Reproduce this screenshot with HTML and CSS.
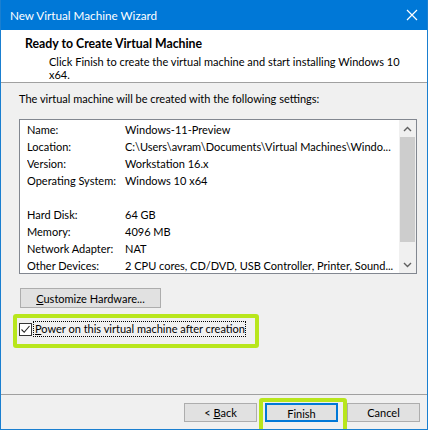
FILE: index.html
```html
<!DOCTYPE html>
<html lang="en">
<head>
    <meta charset="UTF-8">
    <title>New Virtual Machine Wizard</title>
    <link rel="stylesheet" href="styles.css">
</head>
<body>
    <div class="window">
        <div class="titlebar">
            <span class="title">New Virtual Machine Wizard</span>
            <svg class="close" width="12" height="12" viewBox="0 0 12 12">
                <path d="M1 1 L11 11 M11 1 L1 11" stroke="#fff" stroke-width="1.2" fill="none"/>
            </svg>
        </div>

        <div class="header">
            <div class="header-title">Ready to Create Virtual Machine</div>
            <div class="header-sub">Click Finish to create the virtual machine and start installing Windows 10 x64.</div>
        </div>

        <div class="content">
            <p class="intro">The virtual machine will be created with the following settings:</p>

            <div class="summary">
                <div class="rows">
                    <div class="row"><span class="label">Name:</span><span class="value">Windows-11-Preview</span></div>
                    <div class="row"><span class="label">Location:</span><span class="value">C:\Users\avram\Documents\Virtual Machines\Windo...</span></div>
                    <div class="row"><span class="label">Version:</span><span class="value">Workstation 16.x</span></div>
                    <div class="row"><span class="label">Operating System:</span><span class="value">Windows 10 x64</span></div>
                    <div class="row"></div>
                    <div class="row"><span class="label">Hard Disk:</span><span class="value">64 GB</span></div>
                    <div class="row"><span class="label">Memory:</span><span class="value">4096 MB</span></div>
                    <div class="row"><span class="label">Network Adapter:</span><span class="value">NAT</span></div>
                    <div class="row"><span class="label">Other Devices:</span><span class="value">2 CPU cores, CD/DVD, USB Controller, Printer, Sound...</span></div>
                </div>
                <div class="scrollbar">
                    <div class="arrow">
                        <svg width="9" height="6" viewBox="0 0 9 6"><path d="M1 5 L4.5 1.5 L8 5" stroke="#606060" stroke-width="1.4" fill="none"/></svg>
                    </div>
                    <div class="track"><div class="thumb"></div></div>
                    <div class="arrow">
                        <svg width="9" height="6" viewBox="0 0 9 6"><path d="M1 1 L4.5 4.5 L8 1" stroke="#606060" stroke-width="1.4" fill="none"/></svg>
                    </div>
                </div>
            </div>

            <button class="btn customize"><u>C</u>ustomize Hardware...</button>

            <div class="highlight check-highlight">
                <label class="check">
                    <span class="box">
                        <svg width="11" height="11" viewBox="0 0 11 11"><path d="M1.5 5.5 L4.2 8.3 L9.5 2" stroke="#222" stroke-width="1.1" fill="none"/></svg>
                    </span>
                    <span class="check-text"><u>P</u>ower on this virtual machine after creation</span>
                </label>
            </div>
        </div>

        <div class="footer">
            <button class="btn">&lt; <u>B</u>ack</button>
            <div class="highlight finish-highlight">
                <button class="btn default">Finish</button>
            </div>
            <button class="btn">Cancel</button>
        </div>
    </div>
</body>
</html>
```

FILE: styles.css
```css
* {
    box-sizing: border-box;
}

body {
    margin: 0;
    font-family: 'Lato', 'Noto Sans', sans-serif;
    font-size: 11px;
    color: #000;
    background: #fff;
}

.window {
    width: 428px;
    height: 430px;
    display: flex;
    flex-direction: column;
    background: #f0f0f0;
    border-left: 1px solid #1a7fd0;
    border-right: 1px solid #1a7fd0;
    border-bottom: 1px solid #1a7fd0;
    overflow: hidden;
}

.titlebar {
    height: 30px;
    margin: 0 -1px;
    background: #0078d7;
    color: #fff;
    display: flex;
    align-items: center;
    justify-content: space-between;
    padding: 0 10px 0 10px;
    font-size: 11.7px;
}

.header {
    height: 53px;
    background: #fff;
    border-bottom: 1px solid #a0a0a0;
    padding: 6px 0 0 24px;
}

.header-title {
    font-weight: bold;
    font-size: 12.3px;
    line-height: 16px;
}

.header-sub {
    padding: 3px 12px 0 24px;
    line-height: 13px;
}

.content {
    flex: 1;
    padding: 8px 10px 0 18px;
}

.intro {
    margin: 0;
    line-height: 16px;
}

.summary {
    margin-top: 12px;
    width: 398px;
    height: 155px;
    background: #fff;
    border: 1px solid #828790;
    display: flex;
}

.rows {
    flex: 1;
    min-width: 0;
    padding: 1px 0 0 7px;
}

.row {
    height: 17px;
    line-height: 17px;
    display: flex;
    white-space: nowrap;
    overflow: hidden;
}

.label {
    flex: none;
    width: 98px;
}

.scrollbar {
    width: 17px;
    background: #f0f0f0;
    display: flex;
    flex-direction: column;
}

.arrow {
    height: 17px;
    display: flex;
    align-items: center;
    justify-content: center;
}

.track {
    flex: 1;
    padding: 0 1px 14px 1px;
}

.thumb {
    height: 105px;
    background: #cdcdcd;
}

.btn {
    font-family: inherit;
    font-size: 11px;
    color: #000;
    height: 20px;
    padding: 0;
    background: #e1e1e1;
    border: 1px solid #adadad;
    line-height: 17px;
}

.customize {
    display: block;
    margin-top: 14px;
    margin-left: 1px;
    width: 141px;
}

.highlight {
    border: 4px solid #b8e61c;
    border-radius: 3px;
}

.check-highlight {
    margin-top: 6px;
    margin-left: -6px;
    width: 246px;
    height: 34px;
    padding: 3px 0 0 2px;
}

.check {
    display: flex;
    align-items: center;
    gap: 1px;
}

.box {
    width: 13px;
    height: 13px;
    border: 1px solid #333;
    background: #fff;
    display: flex;
    align-items: center;
    justify-content: center;
}

.check-text {
    border: 1px dotted #000;
    line-height: 14px;
    padding: 0 0 0 1px;
    white-space: nowrap;
}

.footer {
    height: 35px;
    border-top: 1px solid #a0a0a0;
    display: flex;
    justify-content: flex-end;
    align-items: flex-start;
    padding: 8px 7px 0 0;
}

.footer .btn {
    width: 73px;
    height: 19px;
}

.finish-highlight {
    margin: -5px 0 0 2px;
    padding: 1px 5px 8px 2px;
}

.btn.default {
    border: 2px solid #0078d7;
}
```
